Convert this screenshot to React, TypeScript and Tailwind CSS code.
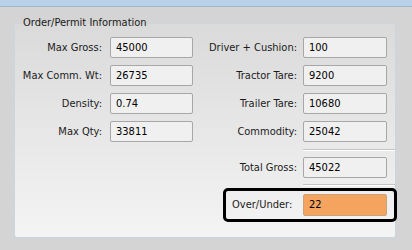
import React from "react";

interface FieldProps {
  label: string;
  value: string;
  labelWidth: string;
  inputWidth: string;
  gap: string;
}

const Field: React.FC<FieldProps> = ({ label, value, labelWidth, inputWidth, gap }) => (
  <div className={`flex h-[21px] items-center ${gap}`}>
    <span className={`${labelWidth} text-right whitespace-nowrap`}>{label}</span>
    <div className={`${inputWidth} h-[21px] flex items-center rounded-[2px] border border-[#a7a7a7] bg-[#f0f0f0] pl-[5px] text-black`}>
      {value}
    </div>
  </div>
);

const leftFields = [
  { label: "Max Gross:", value: "45000" },
  { label: "Max Comm. Wt:", value: "26735" },
  { label: "Density:", value: "0.74" },
  { label: "Max Qty:", value: "33811" },
];

const rightFields = [
  { label: "Driver + Cushion:", value: "100" },
  { label: "Tractor Tare:", value: "9200" },
  { label: "Trailer Tare:", value: "10680" },
  { label: "Commodity:", value: "25042" },
];

const Separator = () => (
  <div className="ml-[103px] h-[2px] border-t border-[#c4c4c4] border-b-white border-b" />
);

const App: React.FC = () => {
  return (
    <div
      className="w-[412px] h-[250px] overflow-hidden bg-[#d4d4d4] text-[11px] leading-[14px] text-[#1b1b1b]"
      style={{ fontFamily: '"DejaVu Sans Condensed", "Liberation Sans", sans-serif' }}
    >
      <div className="h-[7px] bg-[#b9d1ea] border-b border-[#a2b6ca]" />
      <fieldset className="ml-[14px] mt-[9px] w-[382px] h-[222px] rounded-[3px] border border-[#cbd5df] bg-linear-to-b from-[#dadada] to-[#f4f4f4] p-0 pt-[7px]">
        <legend className="ml-[6px] px-[2px] text-[#1b1b1b]">Order/Permit Information</legend>
        <div className="flex gap-[7px]">
          <div className="w-[178px] flex flex-col gap-[7px]">
            {leftFields.map((f) => (
              <Field key={f.label} label={f.label} value={f.value} labelWidth="w-[87px]" inputWidth="w-[83px]" gap="gap-[8px]" />
            ))}
          </div>
          <div className="flex-1 flex flex-col">
            <div className="flex flex-col gap-[7px]">
              {rightFields.map((f) => (
                <Field key={f.label} label={f.label} value={f.value} labelWidth="w-[97px]" inputWidth="w-[84px]" gap="gap-[6px]" />
              ))}
            </div>
            <div className="mt-[7px]">
              <Separator />
            </div>
            <div className="mt-[6px]">
              <Field label="Total Gross:" value="45022" labelWidth="w-[97px]" inputWidth="w-[84px]" gap="gap-[6px]" />
            </div>
            <div className="mt-[6px]">
              <Separator />
            </div>
            <div className="mt-[2px] ml-[23px] -mr-[2px] h-[34px] rounded-[5px] border-[3px] border-black flex items-center pl-[6px] pr-[7px]">
              <span className="flex-1 whitespace-nowrap">Over/Under:</span>
              <div className="w-[84px] h-[22px] flex items-center rounded-[2px] border border-[#c9a27c] bg-[#f5a460] pl-[5px] text-black">
                22
              </div>
            </div>
          </div>
        </div>
      </fieldset>
    </div>
  );
};

export default App;
